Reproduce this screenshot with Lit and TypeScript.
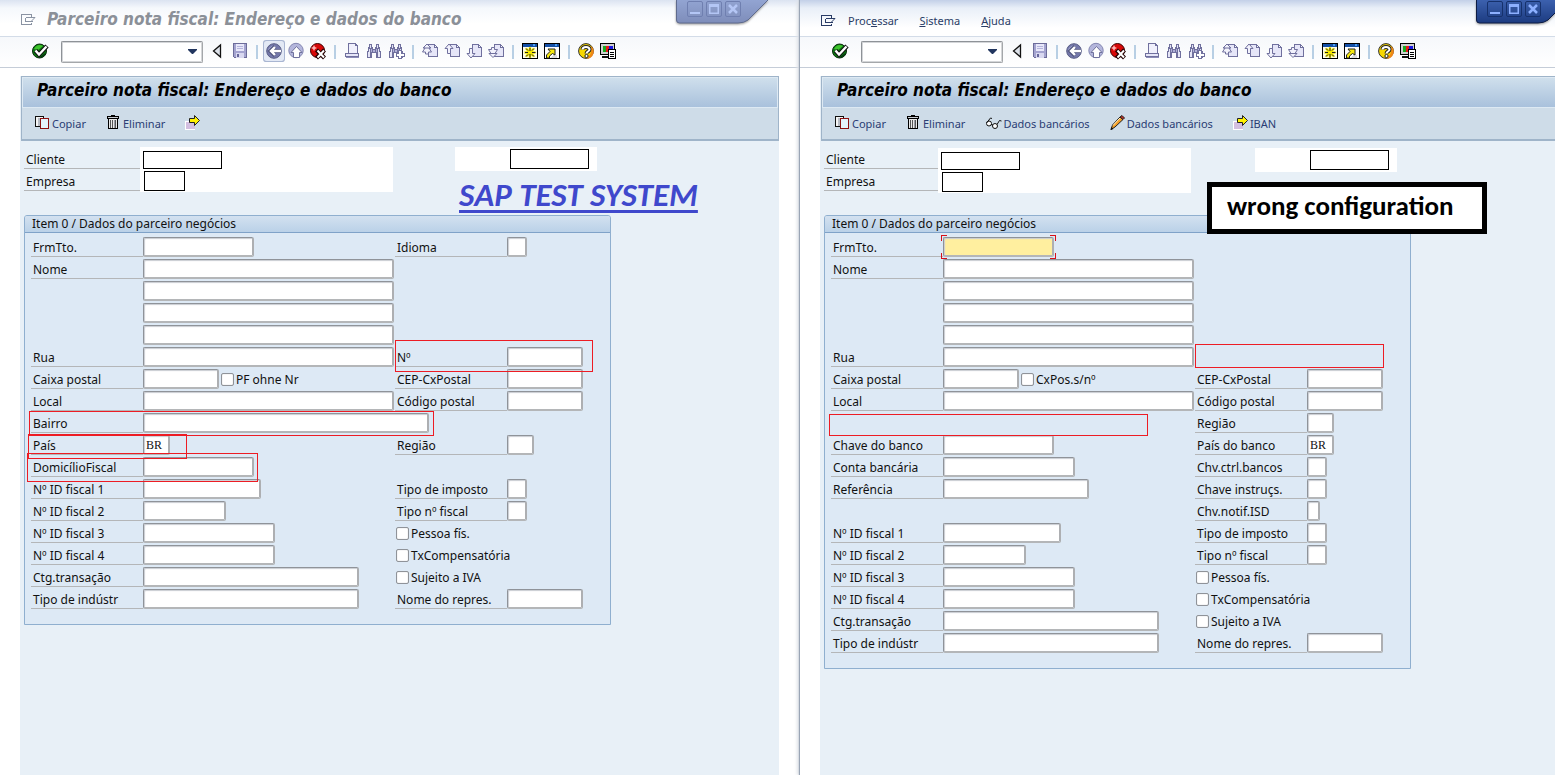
import { LitElement, html, css, svg, nothing } from "lit";
import { customElement, property } from "lit/decorators.js";
import { styleMap } from "lit/directives/style-map.js";

interface Field { id: string; label?: string; width?: number; value?: string; check?: string; focus?: boolean }
interface Row { left?: Field; right?: Field }
interface Mark { x: number; y: number; w: number; h: number }

const pic = (body: unknown, w = 16, h = 16) =>
  html`<svg width=${w} height=${h} viewBox="0 0 ${w} ${h}" fill="none" aria-hidden="true">${body}</svg>`;

const L = "#70709e";

const binoculars = svg`<g shape-rendering="crispEdges">
  <path d="M3 1h3v3h1v2h2V4h1V1h3v3h1v4h1v7h-5v-5H6v5H1V8h1V4h1z" fill="${L}"/>
  <path d="M4 2h1v3H4zM3 6h1v8H2V9h1zM11 2h1v3h-1zM12 6h1v3h1v5h-2z" fill="#e4e4f6"/>
  <path d="M5 6h1v3H5zM7 7h2v2H7zM10 6h1v3h-1z" fill="#b0b0d8"/></g>`;
const page = svg`<g shape-rendering="crispEdges"><path d="M6.500 1.500h6v3h3v9h-9z" fill="#e6e6f8" stroke="${L}"/><path d="M13 2h1v1h-1zM14 3h1v1h-1z" fill="${L}"/></g>`;

const icons: Record<string, unknown> = {
  menu: pic(svg`<g shape-rendering="crispEdges" stroke="currentColor"><path d="M10.500 2.500v-2H.5v10h10v-2M4.500 3.500h7M4.500 3.500v4h7"/></g><path d="M8 3.500h6l-4 4" stroke="currentColor"/>`, 15, 11),
  enter: pic(svg`<circle cx="7.500" cy="8" r="7" fill="#0c7a12" stroke="#062a0a"/><path d="M2 6a6 6 0 0 1 9-3L6 7z" fill="#3fc42c"/><path d="M7 14.500l7-5a7 7 0 0 1-7 5z" fill="#053a10"/><path d="M3.500 7.500l3.500 4L15 3" stroke="#111" stroke-width="4.500"/><path d="M3.500 7.500l3.500 4L14.500 3.500" stroke="#fff" stroke-width="2.400"/>`),
  tri: pic(svg`<path d="M10.500 2v12L3.500 8z" fill="#dde2ea" stroke="#111" stroke-width="1.300"/>`),
  save: pic(svg`<g shape-rendering="crispEdges"><path d="M1.500 .5h13v14h-12l-1-1z" fill="#a4a4d0" stroke="#6c6c9a"/><path d="M4 1h8v7H4z" fill="#e8e8fa"/><path d="M5 3.500h6M5 5.500h6" stroke="#b4b4dc"/><path d="M4 10h8v5H4z" fill="#d8d8f0"/><path d="M5 11h2v3H5z" fill="#66669a"/></g>`),
  back: pic(svg`<circle cx="8" cy="8" r="7.300" fill="#7478aa" stroke="#585d86"/><path d="M2 7a6 6 0 0 1 8-4L5 8z" fill="#9ba0cc"/><path d="M9 3.500L4.500 8 9 12.500M5 8h10" stroke="#50557c" stroke-width="4"/><path d="M9 4L5 8l4 4M5 8h10" stroke="#fff" stroke-width="2.400"/>`),
  up: pic(svg`<circle cx="8" cy="7.500" r="7.200" fill="#b4b6dc" stroke="#8487b2"/><path d="M8.500 3.500l5.500 6h-2.500v5h-6v-5H3z" fill="#fff" stroke="#70739e"/>`),
  cancel: pic(svg`<circle cx="7.500" cy="7.500" r="7" fill="#d80808" stroke="#3c0000"/><path d="M4 2l1 2 2 1-2 1-1 2-1-2-2-1 2-1z" fill="#ffb0b0"/><path d="M6.500 7l8 8m0-8l-8 8" stroke="#200" stroke-width="4.200"/><path d="M7.500 7.500l6.500 7m0-7l-6.500 7" stroke="#fff" stroke-width="2"/>`),
  print: pic(svg`<g shape-rendering="crispEdges"><path d="M4.500 10V.5h7l2 2V10" fill="#f0f0fc" stroke="${L}"/><path d="M11.500 .5v2h2" stroke="${L}"/><path d="M1.500 10.500h13v3h-13z" fill="#e6e6f8" stroke="${L}"/><path d="M2 14.500h13" stroke="#8c8cb8"/></g>`),
  find: pic(binoculars),
  findNext: pic(svg`${binoculars}<g shape-rendering="crispEdges"><path d="M10 7h4v3h3v4h-3v2h-4v-2H8v-4h2z" fill="${L}"/><path d="M11 8h2v3h3v2h-3v2h-2v-2H9v-2h2z" fill="#fff"/></g>`),
  first: pic(svg`${page}<path d="M5 1l4 4H7l2.500 4H6.500v2h-3V9H.5L3 5H1z" fill="#f2f2fc" stroke="${L}"/><path d="M2 5h6" stroke="${L}"/>`),
  prev: pic(svg`${page}<path d="M5 1l4 4.500H6.500v5h-3v-5H1z" fill="#f2f2fc" stroke="${L}"/>`),
  next: pic(svg`${page}<path d="M5 15l-4-4.500h2.500v-5h3v5H9z" fill="#f2f2fc" stroke="${L}"/>`),
  last: pic(svg`${page}<path d="M5 14.500L1 10.500h2L.5 6.500h3v-2h3v2h3L7 10.500h2z" fill="#f2f2fc" stroke="${L}"/><path d="M2 10.500h6" stroke="${L}"/>`),
  session: pic(svg`<g shape-rendering="crispEdges"><path d="M.5.5h15v15H.5z" fill="#fffde8" stroke="#000"/><path d="M1 1h14v3H1z" fill="#1450a8"/><path d="M11 1h2v2h-2z" fill="#4a9cf0"/></g><path d="M8 4v11M2.500 9.500h11M4 5.500l8 8m0-8l-8 8" stroke="#f5e800" stroke-width="2.400"/><path d="M8 5v3M8 11v3.500M3 9.500h3M10 9.500h3.500M4 5.500l2 2m4 4l2 2m0-8l-2 2m-4 4l-2 2" stroke="#222"/>`),
  shortcut: pic(svg`<g shape-rendering="crispEdges"><path d="M.5.5h15v15H.5z" fill="#fff" stroke="#000"/><path d="M1 1h14v3H1z" fill="#1450a8"/><path d="M11 1h2v2h-2z" fill="#4a9cf0"/><path d="M9 12h4v3H7z" fill="#dcdcdc"/></g><path d="M2.500 15v-3l3.500-3.500-2-2.500H11V12L8.500 10.500 5.500 13v2z" fill="#f7ea10" stroke="#222"/>`),
  help: pic(svg`<circle cx="8" cy="8" r="7.400" fill="#f8d800" stroke="#333"/><path d="M13 3a7 7 0 0 1-5 12.500c4-2 6-6 5-12.500z" fill="#f08818"/><path d="M4.500 6.500C4.500 3 11.500 3 11.500 6.500c0 2-3 2-3 4" stroke="#222" stroke-width="4"/><path d="M4.500 6.500C4.500 3 11.500 3 11.500 6.500c0 2-3 2-3 4" stroke="#fff" stroke-width="2"/><circle cx="8.500" cy="13" r="1.600" fill="#fff" stroke="#222"/>`),
  layout: pic(svg`<g shape-rendering="crispEdges"><path d="M.5.5h14v11H.5z" fill="#d0d0d0" stroke="#000"/><path d="M3 3h3v6H3z" fill="#18a820"/><path d="M6 3h3v6H6z" fill="#e81818"/><path d="M9 3h4v6H9z" fill="#1818e0"/><path d="M2 13.500h8" stroke="#111" stroke-width="2"/><path d="M8.500 6.500h7v9h-7z" fill="#fff" stroke="#000"/><path d="M10 9.500h4M10 11.500h4M10 13.500h4" stroke="#000"/></g>`),
  copy: pic(svg`<g shape-rendering="crispEdges"><path d="M.5 1.500h8v10h-8z" fill="#f4f4f4" stroke="#111"/><path d="M3 3h3v8H3z" fill="#b8bcc4"/><path d="M5.500 3.500h8v10h-8z" fill="#e4f2fb" stroke="#8c1010"/></g>`, 17),
  trash: pic(svg`<g shape-rendering="crispEdges"><path d="M5 .5h4M2 1.500h10" stroke="#000"/><path d="M1.500 1.500h11v2h-11z" fill="#c8ccd2" stroke="#000"/><path d="M2.500 3.500h9v10h-9z" fill="#e8e8e8" stroke="#000"/><path d="M4.500 5v8M6.500 5v8M9.500 5v8" stroke="#555"/><path d="M8 5h1v8H8z" fill="#9a9ea6"/></g>`, 17),
  arrow: pic(svg`<path d="M0 6h10v9H0z" fill="#fff"/><path d="M1 7h9v7H1z" fill="#d3bfe0"/><path d="M4.500 3.500h5v-3L14.500 5.500l-5 5v-3h-5z" fill="#fff200" stroke="#222"/>`, 17),
  glasses: pic(svg`<g stroke="#111"><circle cx="4" cy="8.500" r="2.500" fill="#fff"/><circle cx="10" cy="11" r="2.500" fill="#fff"/><path d="M6 9.500l2 .5M1.500 8l4-5 1.500.5M12 9.500l2.500-4 2 .5"/></g>`, 18),
  pencil: pic(svg`<path d="M1 14.500l1.500-4.500L10 2l3 2.500L5 12z" fill="#f5a028" stroke="#222"/><path d="M10 2l2-1.500L14.500 3 13 4.500z" fill="#c03028" stroke="#222"/><path d="M3 10.500l7-7.500" stroke="#fff3c8"/><path d="M.5 15l1-3 2 2z" fill="#111"/>`, 17),
};

const toolGroups: [string, string][][] = [
  [["tri", "Recolher"], ["save", "Gravar"]],
  [["back", "Voltar"], ["up", "Encerrar"], ["cancel", "Cancelar"]],
  [["print", "Imprimir"], ["find", "Procurar"], ["findNext", "Continuar procura"]],
  [["first", "Primeira página"], ["prev", "Página anterior"], ["next", "Página seguinte"], ["last", "Última página"]],
  [["session", "Criar novo modo"], ["shortcut", "Gerar atalho"]],
  [["help", "Ajuda"], ["layout", "Ajustar layout local"]],
];

@customElement("sap-window")
class SapWindow extends LitElement {
  @property({ type: Boolean, reflect: true }) active = false;
  @property({ attribute: false }) rows: Row[] = [];
  @property({ attribute: false }) actions: [string, string][] = [];
  @property({ attribute: false }) marks: Mark[] = [];

  static styles = css`
    * { box-sizing: border-box; }
    :host { display: flex; flex-direction: column; min-width: 0; min-height: 100vh; background: #fff; position: relative; color: #111; }
    :host([active]) { box-shadow: -1px 0 1px #9aa5b5, -3px 0 3px #dfe3e8; }
    button { font: inherit; color: inherit; background: none; border: 0; padding: 0; margin: 0; }
    svg { display: block; flex: none; overflow: visible; }
    .caption { display: flex; justify-content: space-between; height: 37px; border-bottom: 1px solid #d3dce8; background: linear-gradient(#dbe3f1, #f5f8fc 8px, #fff 24px); }
    :host([active]) .caption { background: linear-gradient(#c3d0e8, #e9eff8 8px, #fff 28px); }
    .lead { display: flex; align-items: center; padding: 3px 0 0 21px; gap: 11px; color: #8a93a3; }
    :host([active]) .lead { color: #2a3c66; padding-top: 5px; gap: 12px; }
    .title { margin: 0; font: italic bold 17px/20px "DejaVu Sans Condensed", "DejaVu Sans", sans-serif; padding-bottom: 2px; white-space: nowrap; color: #8b9098; }
    .menu { display: flex; gap: 21px; font-size: 11px; line-height: 18px; padding-top: 1px; }
    .tab { position: relative; width: 94px; height: 26px; margin-right: 30px; flex: none; color: #b4c6f5; --hi: #93a5d3; --lo: #7e8dba; --edge: #5f6b8e; --key: #6f7fb0; }
    :host([active]) .tab { color: #8db0ff; --hi: #3d62b0; --lo: #1c3b80; --edge: #0d1c44; --key: #16316c; }
    .tab > svg { position: absolute; inset: 0; overflow: hidden; filter: drop-shadow(0 1px 1px #999); }
    .tab .keys { position: relative; display: flex; gap: 3px; padding: 1px 0 0 11px; }
    .tab button { width: 16px; height: 16px; border: 1px solid var(--key); border-radius: 2px; display: grid; place-items: center; }
    .tools { display: flex; align-items: center; height: 31px; padding-left: 32px; border-bottom: 1px solid #c5cdd8; background: linear-gradient(#f6f8fb, #fff); }
    .tools button { width: 16px; height: 16px; margin-bottom: 2px; }
    .command { appearance: none; width: 142px; height: 22px; margin: 0 7px 0 13px; border: 1px solid; border-color: #8e9297 #a4a7aa #a4a7aa #8e9297; border-radius: 2px; background: #fff; box-shadow: inset 0 0 0 1px #d4d6d9; }
    .combo { position: relative; display: flex; }
    .combo svg { position: absolute; right: 13px; top: 8px; pointer-events: none; }
    .set { display: flex; gap: 6px; }
    .rule { width: 2px; height: 14px; margin: 0 8px; background: #b8cfe4; }
    .tools .hot { box-shadow: 0 0 0 2px #e3e9f5, 0 0 0 3px #a9b6d2; border-radius: 1px; background: #e3e9f5; }
    .frame { flex: 1; margin: 8px 21px 0 20px; background: #e8f0f7; }
    .head { margin: 0 0 6px 1px; border: solid #9fb4c9; border-width: 1px 1px 2px; background: #cedce8; }
    .head h1 { margin: 0; height: 31px; padding: 2px 14px 0; border: 1px solid #dde9f3; background: linear-gradient(#cfdfec, #a9c1dc); font: italic bold 17px/20px "DejaVu Sans Condensed", "DejaVu Sans", sans-serif; color: #000; white-space: nowrap; }
    .app { display: flex; gap: 20px; height: 31px; padding-left: 13px; font-size: 11px; line-height: 18px; }
    .app button { display: flex; align-items: center; white-space: nowrap; color: #2a3c74; }
    .app svg { margin-bottom: 2px; }
    .keyrow { display: flex; justify-content: space-between; padding-left: 4px; padding-right: 182px; height: 68px; }
    .names { display: flex; width: 369px; }
    .names .tags { flex: 1; }
    .tags label { display: block; height: 22px; line-height: 25px; padding-left: 2px; border-bottom: 1px solid #b4b6b8; }
    .blank { background: #fff; width: 253px; height: 45px; padding: 4px 3px; display: flex; flex-direction: column; gap: 2px; }
    .blank.key { width: 142px; height: 24px; padding: 2px 8px; align-items: flex-end; }
    .blank input { width: 79px; height: 18px; border: 1px solid #000; padding: 0; background: #fff; flex: none; }
    .blank.key input { height: 20px; }
    .blank .co { width: 41px; height: 20px; margin-left: 1px; }
    :host([active]) .names { width: 367px; }
    :host([active]) .blank { margin-top: 1px; }
    .group { position: relative; margin: 0 168px 0 4px; padding: 0 0 13px; border: 1px solid #8fafcf; border-radius: 3px 3px 0 0; background: #dde9f5; }
    .group h2 { margin: 0 0 4px; height: 17px; padding-left: 7px; font-size: inherit; font-weight: normal; line-height: 16px; border-bottom: 1px solid #7fa2c8; background: linear-gradient(#d3e1f0, #bad1e8); border-radius: 2px 2px 0 0; }
    .row { display: grid; grid-template-columns: 112px 252px 112px 1fr; padding-left: 6px; height: 22px; }
    .row label.tag { height: 20px; line-height: 22px; padding-left: 2px; border-bottom: 1px solid #b4b6b8; white-space: nowrap; }
    .cell { display: flex; gap: 2px; height: 20px; min-width: 0; }
    .c1 { grid-column: 1; } .c2 { grid-column: 2; } .c3 { grid-column: 3; } .c4 { grid-column: 4; }
    .span { grid-column: 3 / 5; padding-left: 1px; }
    .text { flex: none; height: 20px; padding: 1px 2px 0; border: 2px solid #a4a6aa; border-color: #8f9399 #adafb2 #b4b6b8 #8f9399; border-width: 1px 2px 2px 1px; border-radius: 2px; background: #fff; font: 12px "Liberation Serif", serif; color: #111; box-shadow: inset 1px 1px 1px #c9ccd2; outline: 0; }
    .text.focus { background: #ffef9f; }
    .check { display: flex; align-items: center; gap: 2px; height: 21px; white-space: nowrap; }
    .check input { appearance: none; width: 13px; height: 13px; margin: 0; border: 1px solid #8f9399; border-radius: 2px; background: #fff; box-shadow: inset 0 0 1px #a4a6aa; }
    .ring { position: relative; }
    .ring svg { position: absolute; left: -2px; top: -2px; }
    .mark { position: absolute; border: 1px solid #ed1c24; pointer-events: none; }
  `;

  private tag(f: Field | undefined, col: string) {
    return f?.label ? html`<label class="tag ${col}" for=${f.id}>${f.label}</label>` : nothing;
  }
  private box(f: Field) {
    const input = html`<input class="text ${f.focus ? "focus" : ""}" id=${f.id} aria-label=${f.label ?? "Nome"} .value=${f.value ?? ""} style=${styleMap({ width: `${f.width}px` })} />`;
    return f.focus
      ? html`<span class="ring">${input}${pic(svg`<path shape-rendering="crispEdges" stroke="#d81018" d="M.5 6V.5H6M109 .5h5.500V6M.5 18v5.500H6M109 23.500h5.500V18"/>`, 115, 24)}</span>`
      : input;
  }
  private tick(id: string, text: string) {
    return html`<span class="check"><input type="checkbox" id=${id} /><label for=${id}>${text}</label></span>`;
  }
  private cellOf(f: Field | undefined, col: string) {
    if (!f) return nothing;
    if (!f.width) return html`<div class="cell span">${this.tick(f.id, f.check!)}</div>`;
    return html`<div class="cell ${col}">${this.box(f)}${f.check ? this.tick(f.id + "c", f.check) : nothing}</div>`;
  }

  render() {
    return html`
      <header class="caption">
        <div class="lead">${icons.menu}
          ${this.active
            ? html`<nav class="menu"><button>Proc<u>e</u>ssar</button><button><u>S</u>istema</button><button><u>A</u>juda</button></nav>`
            : html`<p class="title">Parceiro nota fiscal: Endereço e dados do banco</p>`}
        </div>
        <div class="tab">
          ${pic(svg`<defs><linearGradient id="g" x2="0" y2="1"><stop style="stop-color:var(--hi)"/><stop offset="1" style="stop-color:var(--lo)"/></linearGradient></defs><path d="M.5-1v21q0 3 3 3H62q6 0 10-3L93-1z" fill="url(#g)" style="stroke:var(--edge)"/>`, 94, 26)}
          <div class="keys">
            <button aria-label="Minimizar">${pic(svg`<path d="M1 9h10v2H1z" fill="currentColor"/>`, 12, 12)}</button>
            <button aria-label="Maximizar">${pic(svg`<path d="M1 1h10v10H1zM2.500 4v5.500h7V4z" fill="currentColor" fill-rule="evenodd"/>`, 12, 12)}</button>
            <button aria-label="Fechar">${pic(svg`<path d="M2 2l8 8m0-8l-8 8" stroke="currentColor" stroke-width="2.500"/>`, 12, 12)}</button>
          </div>
        </div>
      </header>
      <div class="tools">
        <button aria-label="Entrar">${icons.enter}</button>
        <span class="combo"><select class="command" aria-label="Comando"></select>${pic(svg`<path d="M0 0h9v1L5 5H4L0 1z" fill="#22365f"/>`, 9, 5)}</span>
        ${toolGroups.map((g, i) => html`${i ? html`<i class="rule"></i>` : nothing}<span class="set">${g.map(([k, t]) => html`<button class=${k === "back" && !this.active ? "hot" : ""} aria-label=${t}>${icons[k]}</button>`)}</span>`)}
      </div>
      <main class="frame">
        <div class="head">
          <h1>Parceiro nota fiscal: Endereço e dados do banco</h1>
          <div class="app">${this.actions.map(([k, t]) => html`<button aria-label=${t || "Seguinte"}>${icons[k]}${t}</button>`)}</div>
        </div>
        <div class="keyrow">
          <div class="names">
            <div class="tags"><label for="cli">Cliente</label><label for="emp">Empresa</label></div>
            <div class="blank"><input id="cli" /><input id="emp" class="co" /></div>
          </div>
          <div class="blank key"><input aria-label="Nome do cliente" /></div>
        </div>
        <section class="group">
          <h2>Item 0 / Dados do parceiro negócios</h2>
          ${this.rows.map((r) => html`<div class="row">${this.tag(r.left, "c1")}${this.cellOf(r.left, "c2")}${this.tag(r.right, "c3")}${this.cellOf(r.right, "c4")}</div>`)}
          ${this.marks.map((m) => html`<i class="mark" style=${styleMap({ left: `${m.x}px`, top: `${m.y}px`, width: `${m.w}px`, height: `${m.h}px` })}></i>`)}
        </section>
      </main>`;
  }
}

let seq = 0;
const f = (label: string | undefined, width: number, extra: Partial<Field> = {}): Field => ({ id: `f${seq++}`, label, width, ...extra });
const c = (check: string): Field => ({ id: `f${seq++}`, check });

const leftRows: Row[] = [
  { left: f("FrmTto.", 111), right: f("Idioma", 20) },
  { left: f("Nome", 251) }, { left: f(undefined, 251) }, { left: f(undefined, 251) }, { left: f(undefined, 251) },
  { left: f("Rua", 251), right: f("Nº", 76) },
  { left: f("Caixa postal", 76, { check: "PF ohne Nr" }), right: f("CEP-CxPostal", 76) },
  { left: f("Local", 251), right: f("Código postal", 76) },
  { left: f("Bairro", 286) },
  { left: f("País", 27, { value: "BR" }), right: f("Região", 27) },
  { left: f("DomicílioFiscal", 111) },
  { left: f("Nº ID fiscal 1", 118), right: f("Tipo de imposto", 20) },
  { left: f("Nº ID fiscal 2", 83), right: f("Tipo nº fiscal", 20) },
  { left: f("Nº ID fiscal 3", 132), right: c("Pessoa fís.") },
  { left: f("Nº ID fiscal 4", 132), right: c("TxCompensatória") },
  { left: f("Ctg.transação", 216), right: c("Sujeito a IVA") },
  { left: f("Tipo de indústr", 216), right: f("Nome do repres.", 76) },
];
const rightRows: Row[] = [
  { left: f("FrmTto.", 111, { focus: true }) },
  { left: f("Nome", 251) }, { left: f(undefined, 251) }, { left: f(undefined, 251) }, { left: f(undefined, 251) },
  { left: f("Rua", 251) },
  { left: f("Caixa postal", 76, { check: "CxPos.s/nº" }), right: f("CEP-CxPostal", 76) },
  { left: f("Local", 251), right: f("Código postal", 76) },
  { right: f("Região", 27) },
  { left: f("Chave do banco", 111), right: f("País do banco", 27, { value: "BR" }) },
  { left: f("Conta bancária", 132), right: f("Chv.ctrl.bancos", 20) },
  { left: f("Referência", 146), right: f("Chave instruçs.", 20) },
  { right: f("Chv.notif.ISD", 13) },
  { left: f("Nº ID fiscal 1", 118), right: f("Tipo de imposto", 20) },
  { left: f("Nº ID fiscal 2", 83), right: f("Tipo nº fiscal", 20) },
  { left: f("Nº ID fiscal 3", 132), right: c("Pessoa fís.") },
  { left: f("Nº ID fiscal 4", 132), right: c("TxCompensatória") },
  { left: f("Ctg.transação", 216), right: c("Sujeito a IVA") },
  { left: f("Tipo de indústr", 216), right: f("Nome do repres.", 76) },
];

@customElement("app-root")
class AppRoot extends LitElement {
  static styles = css`
    :host { display: block; overflow: hidden; font: 12px/16px "Noto Sans", sans-serif; }
    .desk { display: grid; grid-template-columns: 1fr 1fr; width: calc(100% + 45px); }
    .pane { position: relative; display: grid; }
    .note { position: absolute; margin: 0; font-family: Carlito, Lato, sans-serif; font-weight: bold; white-space: nowrap; }
    .system { left: 459px; top: 176px; font-size: 33px; line-height: 38px; font-style: italic; color: #3f48cc; text-decoration: underline; text-decoration-thickness: 3px; text-underline-offset: 4px; }
    .wrong { left: 407px; top: 182px; width: 280px; box-sizing: border-box; border: 5px solid #000; background: #fff; color: #000; font-size: 27px; line-height: 38px; padding: 0 0 4px 15px; }
  `;
  render() {
    return html`<div class="desk">
      <div class="pane">
        <sap-window .rows=${leftRows} .actions=${[["copy", "Copiar"], ["trash", "Eliminar"], ["arrow", ""]]}
          .marks=${[{ x: 370, y: 124, w: 198, h: 32 }, { x: 4, y: 195, w: 405, h: 25 }, { x: 3, y: 218, w: 159, h: 25 }, { x: 2, y: 237, w: 231, h: 29 }]}></sap-window>
        <p class="note system">SAP TEST SYSTEM</p>
      </div>
      <div class="pane">
        <sap-window active .rows=${rightRows}
          .actions=${[["copy", "Copiar"], ["trash", "Eliminar"], ["glasses", "Dados bancários"], ["pencil", "Dados bancários"], ["arrow", "IBAN"]]}
          .marks=${[{ x: 370, y: 128, w: 189, h: 24 }, { x: 4, y: 198, w: 319, h: 22 }]}></sap-window>
        <p class="note wrong">wrong configuration</p>
      </div>
    </div>`;
  }
}
